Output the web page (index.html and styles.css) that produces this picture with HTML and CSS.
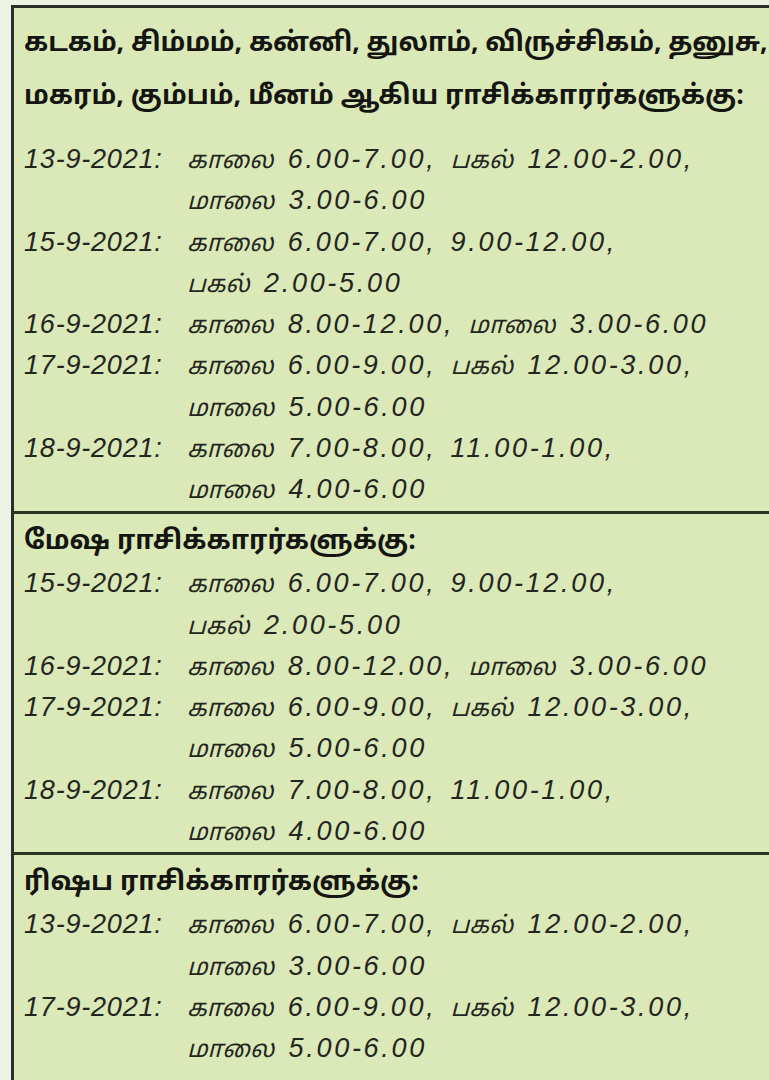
FILE: index.html
```html
<!DOCTYPE html>
<html lang="ta">
<head>
<meta charset="utf-8">
<title>ராசி நேரங்கள்</title>
<link rel="stylesheet" href="styles.css">
</head>
<body>
<div class="box">
  <section class="sec sec-first">
    <h2 class="head head-multi"><span class="tight">கடகம், சிம்மம், கன்னி, துலாம், விருச்சிகம், தனுசு,</span><br>மகரம், கும்பம், மீனம் ஆகிய ராசிக்காரர்களுக்கு:</h2>
    <div class="row"><span class="date">13-9-2021:</span><span class="times"><span class="tw">காலை</span> 6.00-7.00, <span class="tw">பகல்</span> 12.00-2.00,<br><span class="tw">மாலை</span> 3.00-6.00</span></div>
    <div class="row"><span class="date">15-9-2021:</span><span class="times"><span class="tw">காலை</span> 6.00-7.00, 9.00-12.00,<br><span class="tw">பகல்</span> 2.00-5.00</span></div>
    <div class="row"><span class="date">16-9-2021:</span><span class="times"><span class="tw">காலை</span> 8.00-12.00, <span class="tw">மாலை</span> 3.00-6.00</span></div>
    <div class="row"><span class="date">17-9-2021:</span><span class="times"><span class="tw">காலை</span> 6.00-9.00, <span class="tw">பகல்</span> 12.00-3.00,<br><span class="tw">மாலை</span> 5.00-6.00</span></div>
    <div class="row"><span class="date">18-9-2021:</span><span class="times"><span class="tw">காலை</span> 7.00-8.00, 11.00-1.00,<br><span class="tw">மாலை</span> 4.00-6.00</span></div>
  </section>
  <section class="sec sec-mid">
    <h2 class="head">மேஷ ராசிக்காரர்களுக்கு:</h2>
    <div class="row"><span class="date">15-9-2021:</span><span class="times"><span class="tw">காலை</span> 6.00-7.00, 9.00-12.00,<br><span class="tw">பகல்</span> 2.00-5.00</span></div>
    <div class="row"><span class="date">16-9-2021:</span><span class="times"><span class="tw">காலை</span> 8.00-12.00, <span class="tw">மாலை</span> 3.00-6.00</span></div>
    <div class="row"><span class="date">17-9-2021:</span><span class="times"><span class="tw">காலை</span> 6.00-9.00, <span class="tw">பகல்</span> 12.00-3.00,<br><span class="tw">மாலை</span> 5.00-6.00</span></div>
    <div class="row"><span class="date">18-9-2021:</span><span class="times"><span class="tw">காலை</span> 7.00-8.00, 11.00-1.00,<br><span class="tw">மாலை</span> 4.00-6.00</span></div>
  </section>
  <section class="sec">
    <h2 class="head">ரிஷப ராசிக்காரர்களுக்கு:</h2>
    <div class="row"><span class="date">13-9-2021:</span><span class="times"><span class="tw">காலை</span> 6.00-7.00, <span class="tw">பகல்</span> 12.00-2.00,<br><span class="tw">மாலை</span> 3.00-6.00</span></div>
    <div class="row"><span class="date">17-9-2021:</span><span class="times"><span class="tw">காலை</span> 6.00-9.00, <span class="tw">பகல்</span> 12.00-3.00,<br><span class="tw">மாலை</span> 5.00-6.00</span></div>
  </section>
</div>
</body>
</html>
```
FILE: styles.css
```css
html, body {
  margin: 0;
  padding: 0;
}
body {
  background: #eef2e2;
  overflow: hidden;
  height: 1080px;
  padding: 5px 0 0 11px;
  box-sizing: border-box;
}
.box {
  background: #dbe8b7;
  border-top: 3px solid #2b2f25;
  border-left: 3px solid #2b2f25;
  width: 758px;
  height: 1075px;
  box-sizing: border-box;
  color: #1d1f1a;
}
.sec {
  padding: 8px 0 0 10px;
}
.sec + .sec {
  border-top: 3px solid #2b3325;
}
.sec-first {
  padding-top: 10px;
  height: 503px;
  box-sizing: border-box;
}
.sec-mid {
  height: 341px;
  box-sizing: border-box;
}
.head {
  margin: 0;
  font-family: "Noto Sans Tamil", "Lohit Tamil", "Latha", "Noto Sans", "DejaVu Sans", sans-serif;
  font-weight: 700;
  font-size: 26.5px;
  line-height: 41.25px;
  white-space: nowrap;
  color: #141512;
}
.head-multi {
  line-height: 53px;
  margin-bottom: 15px;
}
.tight {
  letter-spacing: -0.1px;
}
.row {
  display: grid;
  grid-template-columns: 163px 1fr;
  font-family: "Liberation Sans", "Noto Sans Tamil", "Lohit Tamil", "Noto Sans", sans-serif;
  font-style: italic;
  font-size: 27px;
  line-height: 41.25px;
  word-spacing: 4px;
  color: #23261f;
  white-space: nowrap;
}
.date {
  letter-spacing: 0.8px;
}
.times {
  letter-spacing: 2.7px;
}
.tw {
  font-size: 24px;
  letter-spacing: 0;
}
```
